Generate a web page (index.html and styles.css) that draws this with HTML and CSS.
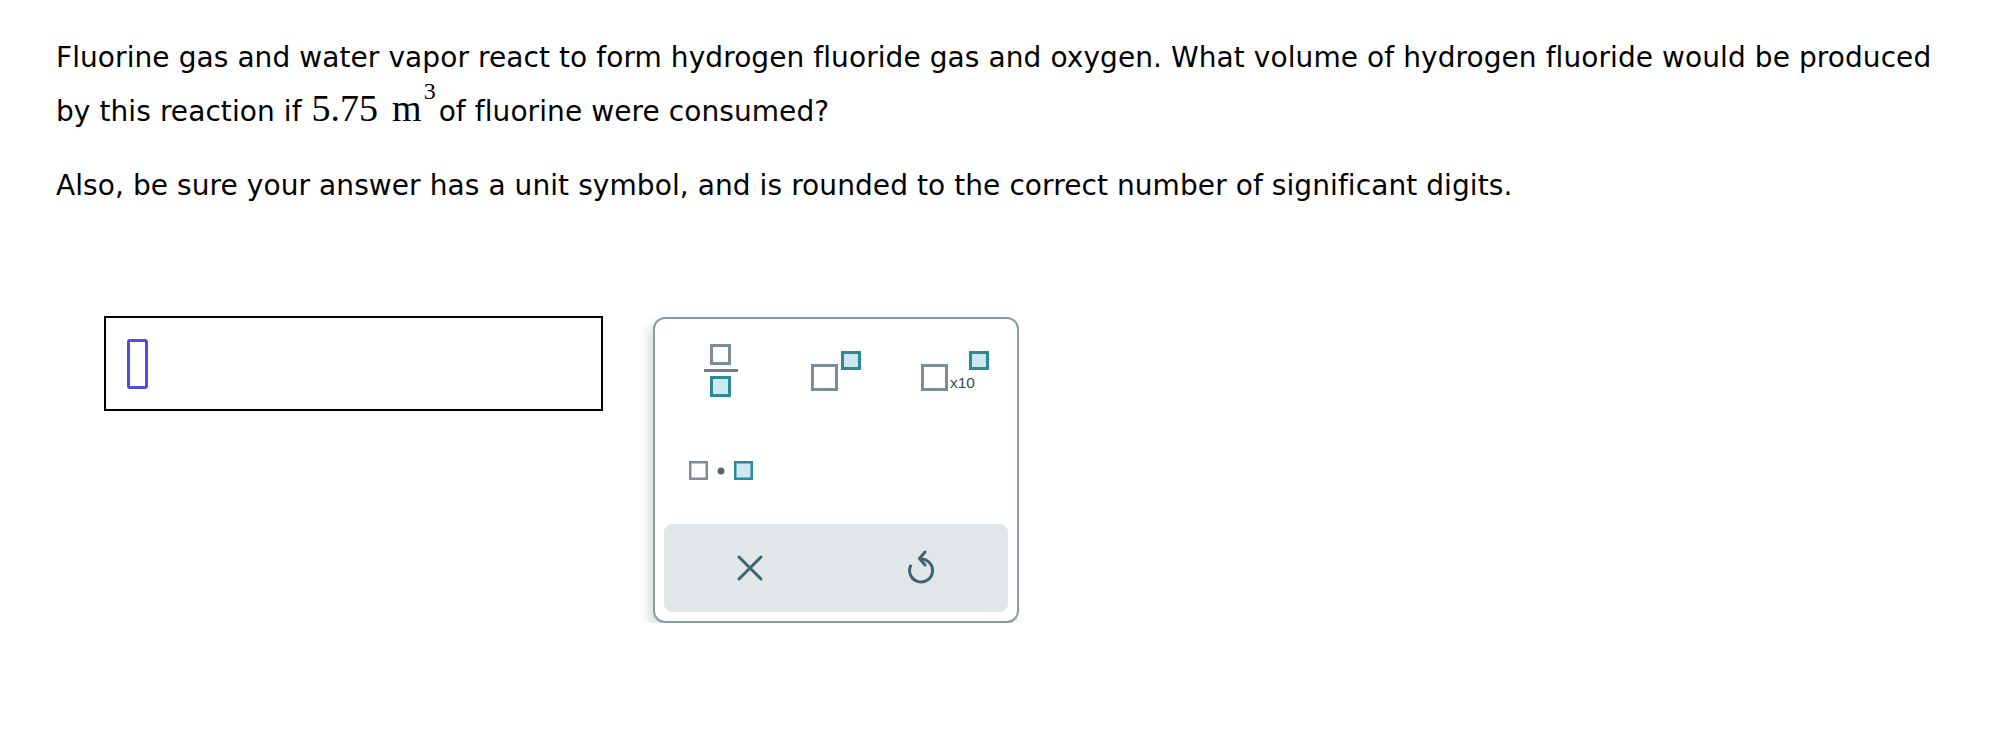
FILE: index.html
```html
<!DOCTYPE html>
<html lang="en">
<head>
<meta charset="utf-8">
<title>Question</title>
<link rel="stylesheet" href="styles.css">
</head>
<body>
<div class="page">
  <div class="question">
    <p class="qline">Fluorine gas and water vapor react to form hydrogen fluoride gas and oxygen. What volume of hydrogen fluoride would be produced by this reaction if <span class="math">5.75<span class="unit">m</span><span class="sup">3</span></span> of fluorine were consumed?</p>
    <p class="qline">Also, be sure your answer has a unit symbol, and is rounded to the correct number of significant digits.</p>
  </div>
  <div class="answer-row">
    <div class="answer-box"><span class="cursor"></span></div>
    <div class="keypad">
      <div class="keys">
        <div class="key">
          <svg class="ico" width="36" height="54" viewBox="0 0 36 54">
            <rect x="8.5" y="2.5" width="18" height="18" fill="#fff" stroke="#7c8d94" stroke-width="3"/>
            <line x1="1" y1="27.5" x2="35" y2="27.5" stroke="#6f8188" stroke-width="3"/>
            <rect x="8.5" y="34.5" width="18" height="18" fill="#cde9f0" stroke="#2a8a9b" stroke-width="3"/>
          </svg>
        </div>
        <div class="key">
          <svg class="ico" width="52" height="41" viewBox="0 0 52 41">
            <rect x="2.5" y="15.5" width="24" height="24" fill="#fff" stroke="#7c8d94" stroke-width="3"/>
            <rect x="32.5" y="2.5" width="17" height="16" fill="#cde9f0" stroke="#2a8a9b" stroke-width="3"/>
          </svg>
        </div>
        <div class="key key-sci">
          <svg class="ico" width="70" height="41" viewBox="0 0 70 41">
            <rect x="2.5" y="15.5" width="24" height="24" fill="#fff" stroke="#7c8d94" stroke-width="3"/>
            <text x="30" y="38" class="x10">x10</text>
            <rect x="50.5" y="2.5" width="17" height="16" fill="#cde9f0" stroke="#2a8a9b" stroke-width="3"/>
          </svg>
        </div>
        <div class="key">
          <svg class="ico" width="66" height="21" viewBox="0 0 66 21">
            <rect x="2.25" y="2.25" width="16.5" height="16.5" fill="#fff" stroke="#7c8d94" stroke-width="2.5"/>
            <circle cx="33" cy="11" r="3.5" fill="#56676e"/>
            <rect x="47.25" y="2.25" width="16.5" height="16.5" fill="#cde9f0" stroke="#2a8a9b" stroke-width="2.5"/>
          </svg>
        </div>
      </div>
      <div class="actions">
        <div class="action">
          <svg width="28" height="28" viewBox="0 0 28 28">
            <path d="M3 3 L25 25 M25 3 L3 25" stroke="#3f6371" stroke-width="3" stroke-linecap="round" fill="none"/>
          </svg>
        </div>
        <div class="action">
          <svg width="30" height="36" viewBox="0 0 30 36">
            <path d="M14 9 A11.5 11.5 0 1 1 3.5 16" stroke="#3f6371" stroke-width="3" stroke-linecap="round" fill="none"/>
            <path d="M18 2 L12.5 8.5 L18 15" stroke="#3f6371" stroke-width="3" stroke-linecap="round" stroke-linejoin="round" fill="none"/>
          </svg>
        </div>
      </div>
    </div>
  </div>
</div>
</body>
</html>
```

FILE: styles.css
```css
html, body {
  margin: 0;
  padding: 0;
  background: #ffffff;
}

body {
  font-family: "DejaVu Sans", Verdana, sans-serif;
  color: #000000;
}

.page {
  padding: 31px 0 0 56px;
}

.question {
  width: 1894px;
}

.qline {
  margin: 0 0 20px;
  font-size: 28px;
  line-height: 54px;
  letter-spacing: 0.08px;
}

.qline:last-child {
  margin-bottom: 0;
}

.math {
  margin: 0 -6px 0 1px;
  font-family: "Liberation Serif", "Times New Roman", serif;
  font-size: 38px;
  line-height: 1;
  letter-spacing: 0;
}

.unit {
  margin-left: 14px;
}

.sup {
  font-size: 24px;
  line-height: 0;
  vertical-align: 22px;
  margin-left: 2px;
}

.answer-row {
  display: flex;
  align-items: flex-start;
  gap: 50px;
  margin: 103px 0 0 48px;
}

.answer-box {
  box-sizing: border-box;
  width: 499px;
  height: 95px;
  border: 2px solid #000000;
  padding: 21px 0 0 21px;
}

.cursor {
  display: block;
  box-sizing: border-box;
  width: 21px;
  height: 50px;
  border: 3px solid #4d4de0;
  border-radius: 3px;
}

.keypad {
  box-sizing: border-box;
  width: 366px;
  height: 306px;
  margin-top: 1px;
  padding: 15px 9px 9px;
  border: 2px solid #8a9ca2;
  border-radius: 12px;
  background: #ffffff;
  box-shadow: -5px 6px 10px rgba(40, 60, 70, 0.16);
}

.keys {
  display: grid;
  grid-template-columns: repeat(3, 1fr);
  grid-template-rows: 72px 72px;
  row-gap: 28px;
}

.key {
  display: flex;
  align-items: center;
  justify-content: center;
}

.key-sci .ico {
  margin-left: 8px;
}

.ico {
  display: block;
}

.x10 {
  font-family: "Liberation Sans", Arial, sans-serif;
  font-size: 15.5px;
  fill: #3b4a50;
}

.actions {
  display: grid;
  grid-template-columns: 1fr 1fr;
  height: 88px;
  margin-top: 18px;
  background: #e1e6e9;
  border-radius: 8px;
}

.action {
  display: flex;
  align-items: center;
  justify-content: center;
}

.action svg {
  display: block;
}
```
